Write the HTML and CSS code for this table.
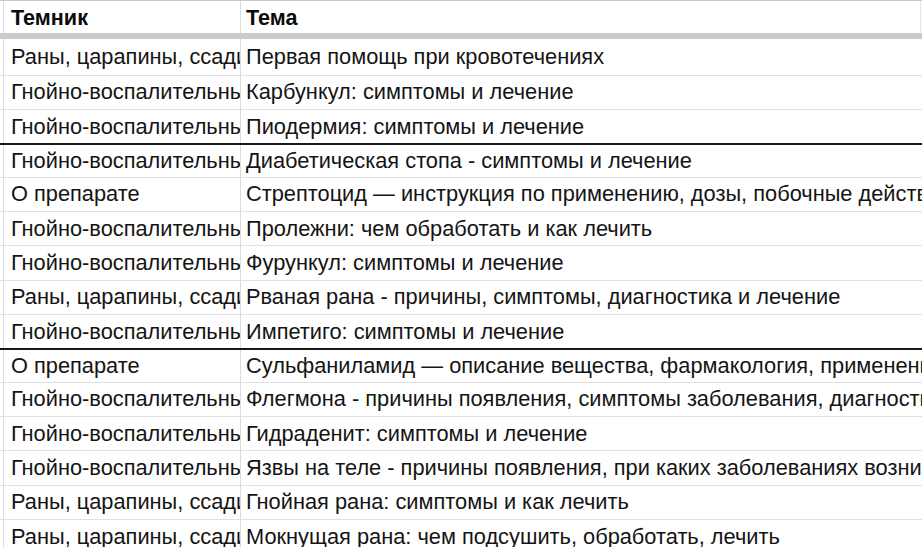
FILE: index.html
```html
<!DOCTYPE html>
<html lang="ru">
<head>
<meta charset="utf-8">
<link rel="stylesheet" href="styles.css">
</head>
<body>
<div class="sheet">
  <div class="row head">
    <div class="cell c1">Темник</div>
    <div class="cell c2">Тема</div>
  </div>
  <div class="freeze"></div>
  <div class="row first">
    <div class="cell c1">Раны, царапины, ссадины</div>
    <div class="cell c2">Первая помощь при кровотечениях</div>
  </div>
  <div class="row">
    <div class="cell c1">Гнойно-воспалительные заболевания</div>
    <div class="cell c2">Карбункул: симптомы и лечение</div>
  </div>
  <div class="row">
    <div class="cell c1">Гнойно-воспалительные заболевания</div>
    <div class="cell c2">Пиодермия: симптомы и лечение</div>
  </div>
  <div class="row group">
    <div class="cell c1">Гнойно-воспалительные заболевания</div>
    <div class="cell c2">Диабетическая стопа - симптомы и лечение</div>
  </div>
  <div class="row">
    <div class="cell c1">О препарате</div>
    <div class="cell c2">Стрептоцид — инструкция по применению, дозы, побочные действия</div>
  </div>
  <div class="row">
    <div class="cell c1">Гнойно-воспалительные заболевания</div>
    <div class="cell c2">Пролежни: чем обработать и как лечить</div>
  </div>
  <div class="row">
    <div class="cell c1">Гнойно-воспалительные заболевания</div>
    <div class="cell c2">Фурункул: симптомы и лечение</div>
  </div>
  <div class="row">
    <div class="cell c1">Раны, царапины, ссадины</div>
    <div class="cell c2">Рваная рана - причины, симптомы, диагностика и лечение</div>
  </div>
  <div class="row">
    <div class="cell c1">Гнойно-воспалительные заболевания</div>
    <div class="cell c2">Импетиго: симптомы и лечение</div>
  </div>
  <div class="row group">
    <div class="cell c1">О препарате</div>
    <div class="cell c2">Сульфаниламид — описание вещества, фармакология, применение</div>
  </div>
  <div class="row">
    <div class="cell c1">Гнойно-воспалительные заболевания</div>
    <div class="cell c2">Флегмона - причины появления, симптомы заболевания, диагностика</div>
  </div>
  <div class="row">
    <div class="cell c1">Гнойно-воспалительные заболевания</div>
    <div class="cell c2">Гидраденит: симптомы и лечение</div>
  </div>
  <div class="row">
    <div class="cell c1">Гнойно-воспалительные заболевания</div>
    <div class="cell c2">Язвы на теле - причины появления, при каких заболеваниях возникают</div>
  </div>
  <div class="row">
    <div class="cell c1">Раны, царапины, ссадины</div>
    <div class="cell c2">Гнойная рана: симптомы и как лечить</div>
  </div>
  <div class="row">
    <div class="cell c1">Раны, царапины, ссадины</div>
    <div class="cell c2">Мокнущая рана: чем подсушить, обработать, лечить</div>
  </div>
</div>
</body>
</html>
```

FILE: styles.css
```css
html, body {
  margin: 0;
  padding: 0;
  background: #ffffff;
  overflow: hidden;
}

.sheet {
  width: 922px;
  height: 547px;
  overflow: hidden;
  border-top: 1px solid #c8c8c8;
  font-family: "Liberation Sans", Arial, sans-serif;
  font-size: 21.8px;
  color: #141414;
}

.row {
  display: flex;
  height: 34.36px;
  box-sizing: border-box;
  border-bottom: 1px solid #e0e0e0;
  padding-left: 3px;
}

.row.head {
  height: 32px;
  border-bottom: none;
  font-weight: bold;
  font-size: 21.6px;
  color: #0c0c0c;
}

.row.first {
  height: 36.5px;
}

.row.group {
  border-top: 2px solid #1a1a1a;
  margin-top: -1px;
}

.freeze {
  height: 6px;
  background: #cbcbcb;
}

.cell {
  display: flex;
  align-items: center;
  white-space: nowrap;
  overflow: hidden;
  box-sizing: border-box;
}

.c1 {
  flex: none;
  width: 237px;
  border-left: 1px solid #dcdcdc;
  padding-left: 7px;
}

.c2 {
  flex: 1;
  min-width: 0;
  border-left: 1px solid #dcdcdc;
  padding-left: 5px;
}

.row.head .c2 {
  border-right: 1px solid #e6e6e6;
  margin-right: 1px;
}

.row.head .cell {
  padding-top: 2px;
}
```
